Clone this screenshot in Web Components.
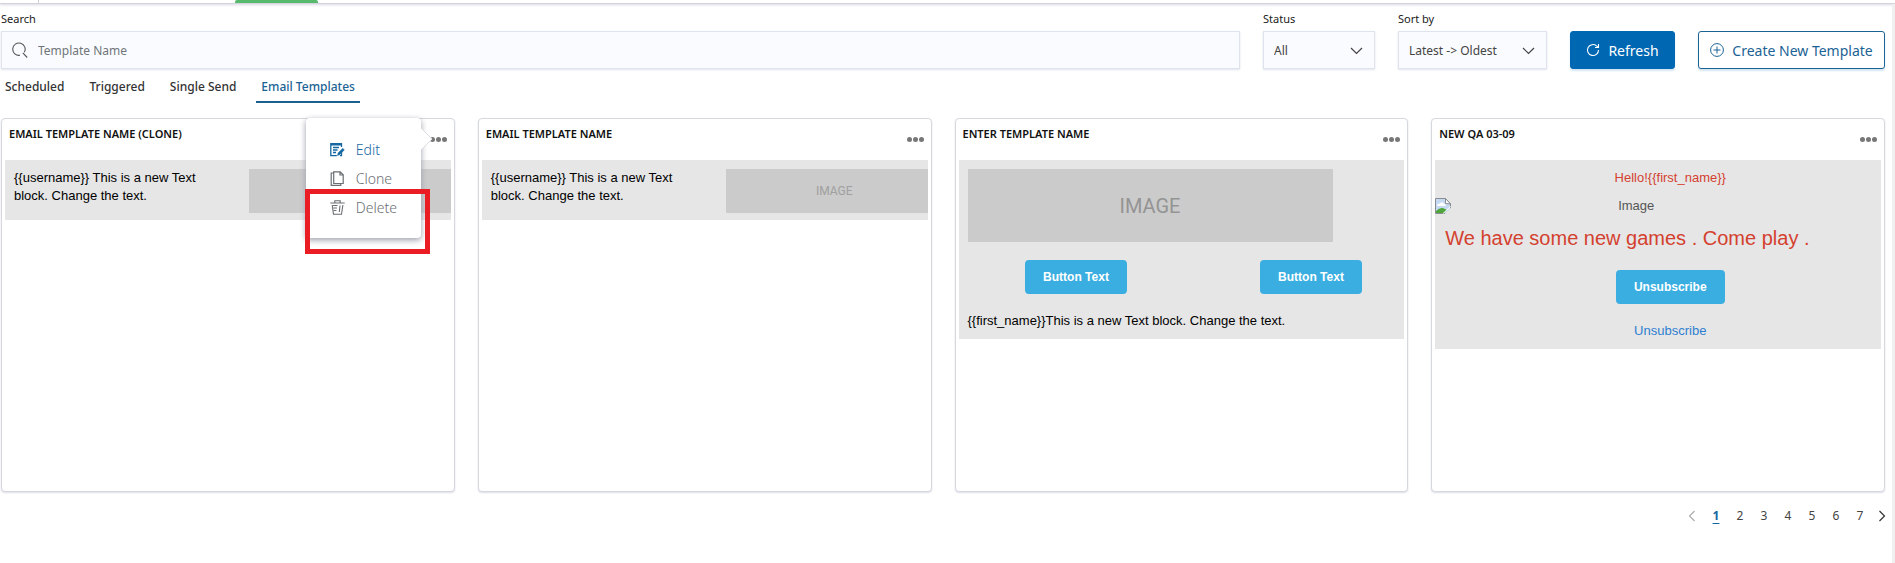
<!DOCTYPE html>
<html lang="en">
<head>
<meta charset="utf-8">
<title>Email Templates</title>
<style>
  body { margin: 0; background: #fff; color: #212121; font: 12px/18px "Noto Sans", "Open Sans", sans-serif; }
</style>
</head>
<body>
<templates-page></templates-page>
<script>
const define = (name, html, setup) => {
  const tpl = document.createElement('template');
  tpl.innerHTML = html;
  customElements.define(name, class extends HTMLElement {
    constructor() {
      super();
      this.attachShadow({ mode: 'open' }).append(tpl.content.cloneNode(true));
    }
    connectedCallback() {
      if (setup && !this.ready) { this.ready = true; setup(this, this.shadowRoot); }
    }
  });
};

define('top-strip', `
<style>
  :host { display: flex; height: 3px; border-bottom: 1px solid #d3d3dc; box-shadow: 0 1px 3px #d8d8e4; }
  .logo { width: 38px; border-right: 1px solid #d0d0d6; }
  .active { width: 83px; margin-left: 196px; background: #57b96b; border-radius: 2px 2px 0 0; }
</style>
<span class="logo"></span><span class="active"></span>`);

define('search-field', `
<style>
  :host { display: block; }
  label { display: block; height: 18px; font-size: 11px; }
  .box { display: flex; align-items: center; gap: 10px; box-sizing: border-box; height: 38px; margin-top: 3px; padding: 0 10px;
         border: 1px solid #dfe3ee; background: #fafbfe; box-shadow: 0 1px 2px #e1e4ec; }
  svg { flex: none; }
  input { flex: 1; min-width: 0; border: 0; padding: 2px 0 0; background: none; outline: 0; font: inherit; color: inherit; }
  input::placeholder { color: #70757a; opacity: 1; }
</style>
<label for="q">Search</label>
<div class="box">
  <svg width="16" height="16" viewBox="0 0 16 16" fill="none" stroke="#555" stroke-width="1.1"><path d="M8 13.300A6.200 6.200 0 1 1 12.300 10.300M10.800 10.800l4.400 4.700"/></svg>
  <input id="q" type="text" placeholder="Template Name">
</div>`);

define('select-field', `
<style>
  :host { display: block; }
  label { display: block; height: 18px; font-size: 11px; }
  .box { display: grid; align-items: center; height: 38px; margin-top: 3px; box-shadow: 0 1px 2px #e1e4ec; }
  select, svg { grid-area: 1 / 1; }
  select { appearance: none; box-sizing: border-box; width: 100%; height: 38px; padding: 2px 10px 0; border: 1px solid #dfe3ee; border-radius: 0;
           background: #fafbfe; font: inherit; color: #444; }
  svg { justify-self: end; margin: 2px 12px 0 0; pointer-events: none; }
</style>
<label for="s"></label>
<div class="box"><select id="s"></select>
  <svg width="13" height="8" viewBox="0 0 13 8" fill="none" stroke="#444" stroke-width="1.2"><path d="M1 1l5.500 5.500L12 1"/></svg>
</div>`, (el, root) => {
  root.querySelector('label').textContent = el.getAttribute('label');
  root.querySelector('select').add(new Option(el.getAttribute('value')));
});

define('app-button', `
<style>
  :host { display: block; }
  button { display: flex; align-items: center; justify-content: center; gap: 8px; box-sizing: border-box; width: 100%; height: 38px; padding: 0;
           border: 1px solid #1b6394; border-radius: 3px; background: #fff; color: #1b6394; font: inherit; font-size: 14px; white-space: nowrap;
           box-shadow: 0 2px 2px #d5e6f2; }
  :host([primary]) button { background: #0067b3; border-color: #0067b3; color: #fff; }
  span { padding-top: 2px; }
  ::slotted(svg) { flex: none; }
</style>
<button type="button"><slot name="icon"></slot><span><slot></slot></span></button>`);

define('tab-bar', `
<style>
  :host { display: flex; gap: 15px; }
  ::slotted(a) { height: 23px; padding: 0 5px; border-bottom: 2px solid transparent; color: #333; text-decoration: none; font-weight: 500; }
  ::slotted(a[aria-current]) { color: #1b6394; border-color: #1b5f8c; }
</style>
<slot></slot>`);

define('template-card', `
<style>
  :host { display: block; position: relative; box-sizing: border-box; min-width: 0; height: 374px; padding: 3px; border: 1px solid #d6d8e0;
          border-radius: 4px; background: #fff; box-shadow: 0 1px 2px #dcdee6; }
  header { display: flex; justify-content: space-between; height: 38px; padding: 3px 4px 0; box-sizing: border-box; }
  h2 { margin: 0; font-size: 11px; line-height: 18px; font-weight: 600; color: #111; text-transform: uppercase; }
  button { display: flex; align-items: center; height: 29px; padding: 0; border: 0; background: none; }
  .preview { overflow: hidden; background: #e6e6e6; font: 13px/18px "Liberation Sans", Arial, sans-serif; color: #000; }
  .mail { width: 470px; }
</style>
<header><h2></h2><button type="button" aria-label="Template actions">
  <svg width="17" height="5" viewBox="0 0 17 5" fill="#777"><circle cx="2.500" cy="2.500" r="2.500"/><circle cx="8.500" cy="2.500" r="2.500"/><circle cx="14.500" cy="2.500" r="2.500"/></svg>
</button></header>
<div class="preview"><div class="mail"><slot></slot></div></div>
<slot name="overlay"></slot>`, (el, root) => {
  root.querySelector('h2').textContent = el.getAttribute('name');
});

define('mail-columns', `
<style>
  :host { display: grid; grid-template-columns: 1fr 1fr; }
</style>
<slot></slot>`);

define('mail-block', `
<style>
  :host { display: block; padding: 9px; }
  :host([center]) { text-align: center; }
  :host([red]) { color: #d4412f; }
  :host([columns]) { padding-bottom: 7px; }
  :host([big]) { padding: 10px; font-size: 20px; line-height: 25px; }
  ::slotted(a) { color: #2f7fd0; text-decoration: none; }
</style>
<slot></slot>`);

define('image-block', `
<style>
  :host { display: flex; align-items: center; justify-content: center; height: 44px; background: #cbcbcb; color: #a0a0a0;
          font-family: Roboto, "Liberation Sans", sans-serif; font-size: 12px; }
  :host([large]) { width: 365px; height: 73px; font-size: 20px; color: #949494; }
</style>
<slot>IMAGE</slot>`);

define('mail-button', `
<style>
  :host { display: flex; justify-content: center; padding: 9px; }
  button { height: 34px; padding: 0 18px; border: 0; border-radius: 4px; background: #3aaee0; color: #fff; font: inherit; font-size: 12px; font-weight: 700; }
</style>
<button type="button"><slot></slot></button>`);

define('missing-image', `
<style>
  :host { display: flex; align-items: center; height: 20px; color: #555; }
  span { width: 370px; text-align: center; }
</style>
<svg width="16" height="16" viewBox="0 0 16 16"><path d="M.5.5h10l5 5v10H.5z" fill="#c6d9f3" stroke="#8a8d91"/><path d="M2 8q0-3 3-2.500Q7 3 8.500 5.500q2.500 0 2 2.500z" fill="#fff"/><path d="M1 15v-2q5-5 9-2l2 1-3 3z" fill="#4fa53a"/><path d="M9 16.500l7.500-7.500v7.500z" fill="#e6e6e6"/><path d="M15.500 6L10.500 5.500V.5z" fill="#fff" stroke="#8a8d91"/><path d="M8 15.500L15.500 8.500" stroke="#fff"/></svg>
<span><slot></slot></span>`);

define('action-menu', `
<style>
  :host { display: block; position: absolute; top: -1px; right: 33px; box-sizing: border-box; width: 115px; height: 120px; padding: 17px 0 0 24px;
          border-radius: 4px; background: #fff; box-shadow: 0 2px 6px #9a9ca8; }
  .arrow { position: absolute; left: 100%; top: 8px; }
  ::slotted(button) { display: flex; align-items: center; gap: 11px; height: 29px; padding: 0; border: 0; background: none; color: #6a6e72;
                      font: inherit; font-size: 14px; font-weight: 300; }
  ::slotted(button.current) { color: #1567a3; }
</style>
<svg class="arrow" width="12" height="26" viewBox="0 0 12 26"><path d="M0 2l11 11L0 24z" fill="#fff"/><path d="M0 2l11 11L0 24" fill="none" stroke="#dcdde3"/></svg>
<slot></slot>`);

define('highlight-frame', `
<style>
  :host { display: block; position: absolute; top: 70px; right: 24px; box-sizing: border-box; width: 125px; height: 65px; border: 5px solid #ea1c24; pointer-events: none; }
</style>`);

define('page-nav', `
<style>
  :host { display: block; }
  nav { display: flex; justify-content: flex-end; align-items: center; }
  a { width: 24px; text-align: center; color: #444; text-decoration: none; }
  a:last-child { width: 20px; }
  a[aria-current] { color: #1567a3; font-weight: 700; text-decoration: underline; text-underline-offset: 3px; }
  svg { display: block; margin: 0 auto; }
</style>
<nav aria-label="Pages">
  <a href="#" aria-label="Previous"><svg width="8" height="12" viewBox="0 0 8 12" fill="none" stroke="#aaa" stroke-width="1.100"><path d="M6.500 1l-5 5 5 5"/></svg></a>
  <a href="#1" aria-current="page">1</a><a href="#2">2</a><a href="#3">3</a><a href="#4">4</a><a href="#5">5</a><a href="#6">6</a><a href="#7">7</a>
  <a href="#" aria-label="Next"><svg width="8" height="12" viewBox="0 0 8 12" fill="none" stroke="#333" stroke-width="1.200"><path d="M1.500 1l5 5-5 5"/></svg></a>
</nav>`);

define('templates-page', `
<style>
  :host { display: flex; flex-direction: column; min-height: 100vh; }
  main { flex: 1; padding: 6px 0 0 1px; border-right: 3px solid #f0f0f0; }
  .content { padding-right: 7px; }
  .filters { display: flex; align-items: flex-end; gap: 23px; }
  search-field { flex: 1; }
  .status { width: 112px; }
  .sort { width: 149px; }
  .refresh { width: 105px; }
  .create { width: 187px; }
  tab-bar { margin: 9px 0 15px -1px; }
  .cards { display: grid; grid-template-columns: repeat(4, minmax(0, 1fr)); gap: 23px; }
  page-nav { margin: 15px -7px 0 0; }
</style>
<top-strip></top-strip>
<main><div class="content">
  <div class="filters">
    <search-field></search-field>
    <select-field class="status" label="Status" value="All"></select-field>
    <select-field class="sort" label="Sort by" value="Latest -&gt; Oldest"></select-field>
    <app-button class="refresh" primary>
      <svg slot="icon" width="14" height="14" viewBox="0 0 14 14" fill="none" stroke="#fff" stroke-width="1.100"><path d="M12.500 7a5.500 5.500 0 1 1-2-4.200L12.300 4.300M12.500 1v3.500H9"/></svg>Refresh</app-button>
    <app-button class="create">
      <svg slot="icon" width="14" height="14" viewBox="0 0 14 14" fill="none" stroke="#1b6394"><circle cx="7" cy="7" r="6.400"/><path d="M7 3.500v7M3.500 7h7"/></svg>Create New Template</app-button>
  </div>
  <tab-bar><a href="#scheduled">Scheduled</a><a href="#triggered">Triggered</a><a href="#single">Single Send</a><a href="#templates" aria-current="page">Email Templates</a></tab-bar>
  <div class="cards">
    <template-card name="Email Template Name (Clone)">
      <mail-columns><mail-block columns>{{username}} This is a new Text block. Change the text.</mail-block><mail-block columns><image-block><span></span></image-block></mail-block></mail-columns>
      <action-menu slot="overlay">
        <button type="button" class="current"><svg width="15" height="14" viewBox="0 0 15 14" fill="none" stroke="currentColor" stroke-width="1.300"><path d="M11.500 4V.7H.8v12h6M11.500 9.500v3.200H10M1 1.800h10M3 4.500h6M3 7h4.500M3 9.500h3"/><path d="M7.500 12.500l.6-2.500 4.700-4.700 1.500 1.600-4.600 4.800z" fill="currentColor" stroke-width=".5"/></svg>Edit</button>
        <button type="button"><svg width="15" height="15" viewBox="0 0 15 15" fill="none" stroke="currentColor" stroke-width="1.200"><path d="M3.700.8h6.500l3 3v8.700H3.700zM10 .8V4h3.200M3.700 2H1.200v12.300h9.600v-1.800"/></svg>Clone</button>
        <button type="button"><svg width="15" height="15" viewBox="0 0 15 15" fill="none" stroke="currentColor" stroke-width="1.100"><path d="M.3 3h14.400M4.800 3V.8h5.400V3M2.200 5l1.300 9.300h8L12.900 5M3 5.500h4.500M3.400 8h3.600M3.800 10.500h2.700M10 5.500L9.300 12"/></svg>Delete</button>
      </action-menu>
      <highlight-frame slot="overlay"></highlight-frame>
    </template-card>
    <template-card name="Email Template Name">
      <mail-columns><mail-block columns>{{username}} This is a new Text block. Change the text.</mail-block><mail-block columns><image-block></image-block></mail-block></mail-columns>
    </template-card>
    <template-card name="Enter Template Name">
      <mail-block><image-block large></image-block></mail-block>
      <mail-columns><mail-button>Button Text</mail-button><mail-button>Button Text</mail-button></mail-columns>
      <mail-block>{{first_name}}This is a new Text block. Change the text.</mail-block>
    </template-card>
    <template-card name="New QA 03-09">
      <mail-block center red>Hello!{{first_name}}</mail-block>
      <missing-image>Image</missing-image>
      <mail-block big red>We have some new games . Come play .</mail-block>
      <mail-button>Unsubscribe</mail-button>
      <mail-block center><a href="#unsubscribe">Unsubscribe</a></mail-block>
    </template-card>
  </div>
  <page-nav></page-nav>
</div></main>`);
</script>
</body>
</html>
